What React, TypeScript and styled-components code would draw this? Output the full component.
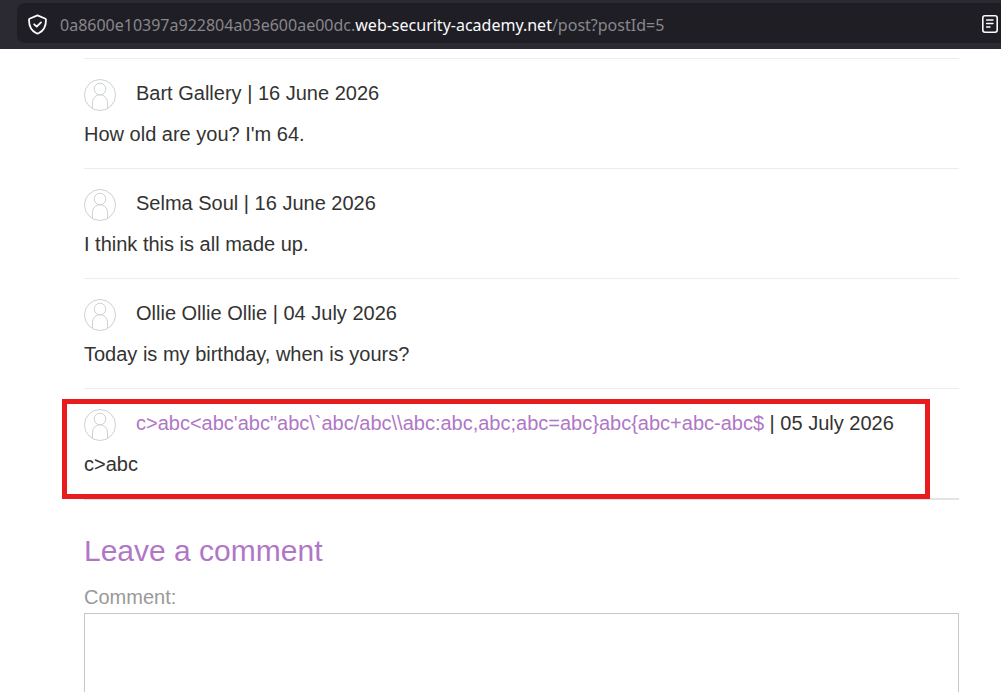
import React from "react";
import styled, { createGlobalStyle } from "styled-components";

const GlobalStyle = createGlobalStyle`
  * { box-sizing: border-box; }
  body {
    margin: 0;
    background: #fff;
    color: #333332;
    font-family: "Liberation Sans", Arial, Helvetica, sans-serif;
    font-size: 20px;
    scrollbar-width: none;
  }
`;

const Toolbar = styled.header`
  display: flex;
  padding: 3px 0 5px 17px;
  background: #2b2a33;
  border-bottom: 1px solid #2a2838;
`;

const AddressBar = styled.div`
  flex: 1;
  min-width: 0;
  display: flex;
  align-items: center;
  height: 40px;
  padding: 2px 2px 0 10px;
  border-radius: 8px 0 0 8px;
  background: #1f1e25;
`;

const IconButton = styled.button`
  display: flex;
  flex: none;
  padding: 0;
  border: 0;
  background: none;
  color: #fbfbfe;
`;

const Address = styled.div`
  flex: 1;
  min-width: 0;
  padding: 2px 12px 0;
  overflow: hidden;
  white-space: nowrap;
  font-family: "Noto Sans", "Open Sans", sans-serif;
  font-size: 16px;
  line-height: 24px;
  color: #88878c;
`;

const Host = styled.span`
  color: #fbfbfe;
`;

const Page = styled.main`
  padding: 9px 42px 40px 84px;
`;

const CommentItem = styled.section`
  position: relative;
  padding: 20px 0 19px;
  border-top: 1px solid #ebeced;
`;

const Byline = styled.div`
  display: flex;
  align-items: flex-start;
  gap: 20px;
  margin-bottom: 8px;
  line-height: 28px;
`;

const Avatar = styled.svg`
  flex: none;
  width: 32px;
  height: 32px;
`;

const Body = styled.p`
  margin: 0;
  line-height: 30px;
`;

const AuthorLink = styled.a`
  color: #b077c6;
  text-decoration: none;
`;

const Highlight = styled.div`
  position: absolute;
  inset: 10px 29px -1px -22px;
  border: 5px solid #e81c1c;
  pointer-events: none;
`;

const Divider = styled.hr`
  height: 2px;
  margin: 0;
  border: 0;
  background: #e4e4e4;
`;

const Heading = styled.h2`
  margin: 31px 0 14px;
  font-size: 30px;
  font-weight: 400;
  line-height: 40px;
  color: #b077c6;
`;

const Label = styled.label`
  display: block;
  line-height: 24px;
  color: #999;
`;

const CommentBox = styled.textarea`
  display: block;
  width: 100%;
  height: 240px;
  margin-top: 4px;
  padding: 10px;
  border: 1px solid #c6c8c8;
  background: #fff;
  font: inherit;
  resize: none;
`;

const Person = () => (
  <Avatar viewBox="0 0 32 32" fill="none" stroke="#cdd2d2" aria-hidden="true">
    <circle cx="16" cy="16" r="15.5" />
    <circle cx="16" cy="10" r="5.8" />
    <path d="M8.5 29.5V23.2a7.5 7.5 0 0 1 15 0v6.3" />
  </Avatar>
);

const comments = [
  { author: "Bart Gallery", date: "16 June 2026", text: "How old are you? I'm 64." },
  { author: "Selma Soul", date: "16 June 2026", text: "I think this is all made up." },
  { author: "Ollie Ollie Ollie", date: "04 July 2026", text: "Today is my birthday, when is yours?" },
  {
    author: "c>abc<abc'abc\"abc\\`abc/abc\\\\abc:abc,abc;abc=abc}abc{abc+abc-abc$",
    date: "05 July 2026",
    text: "c>abc",
    linked: true,
  },
];

export default function App() {
  return (
    <>
      <GlobalStyle />
      <Toolbar>
        <AddressBar>
          <IconButton aria-label="Site protections">
            <svg width="21" height="21" viewBox="0 0 21 21" fill="none" stroke="currentColor" strokeWidth="1.8" strokeLinecap="round" strokeLinejoin="round">
              <path d="M10.5 1.4 18 4.5q1 .4 1 1.4c0 6-1.8 10.5-7.4 13.3q-1.1.6-2.2 0C3.8 16.4 2 11.9 2 5.9q0-1 1-1.4Z" />
              <path d="m7.2 10.3 2.5 2.3 4.3-4.2" />
            </svg>
          </IconButton>
          <Address>
            0a8600e10397a922804a03e600ae00dc.<Host>web-security-academy.net</Host>/post?postId=5
          </Address>
          <IconButton aria-label="Reader view">
            <svg width="18" height="20" viewBox="0 0 18 20" fill="none" stroke="currentColor" strokeLinecap="round">
              <rect x="1.8" y="1.8" width="14.4" height="16.4" rx="2.2" strokeWidth="1.6" />
              <path d="M5.6 6h6.4M5.6 9.5h6.4M5.6 13h3.4" strokeWidth="1.4" />
            </svg>
          </IconButton>
        </AddressBar>
      </Toolbar>
      <Page>
        {comments.map((c) => (
          <CommentItem key={c.author}>
            <Byline>
              <Person />
              <span>
                {c.linked ? <AuthorLink href="#author">{c.author}</AuthorLink> : c.author} | {c.date}
              </span>
            </Byline>
            <Body>{c.text}</Body>
            {c.linked && <Highlight />}
          </CommentItem>
        ))}
        <Divider />
        <Heading>Leave a comment</Heading>
        <form>
          <Label htmlFor="comment">Comment:</Label>
          <CommentBox id="comment" />
        </form>
      </Page>
    </>
  );
}
